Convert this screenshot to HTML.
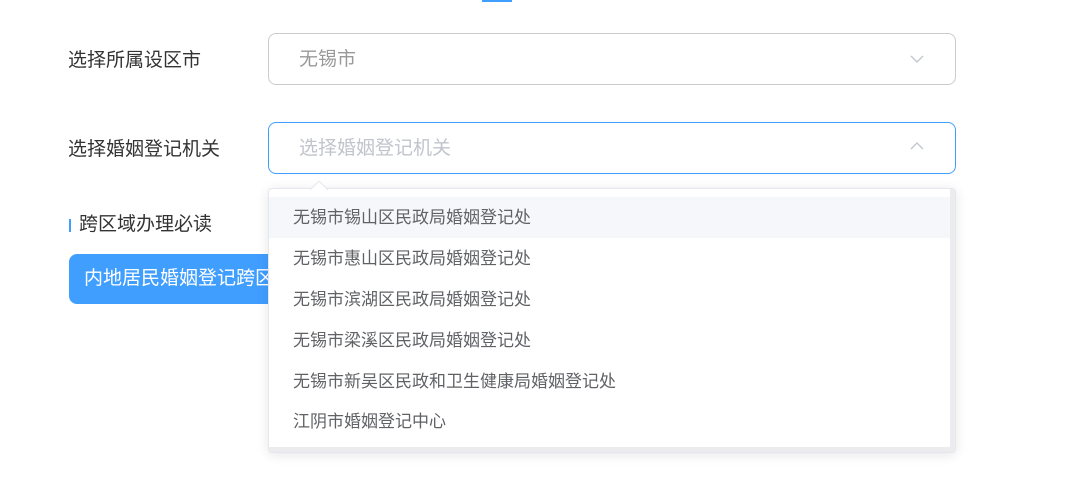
<!DOCTYPE html>
<html><head><meta charset="utf-8"><style>
body{margin:0;width:1078px;height:488px;background:#fff;position:relative;overflow:hidden;font-family:"Liberation Sans","Noto Sans CJK SC",sans-serif;}
.a{position:absolute}
.lbl{font-size:19px;color:#333;line-height:24px}
.sel{left:268px;width:686px;height:50px;border:1px solid #ccc;border-radius:8px;box-sizing:content-box}
.sel span{position:absolute;left:30px;top:14px;font-size:19px;line-height:24px}
.dd{left:268px;top:188px;width:688px;height:265px;background:#fff;border:1px solid #e4e7ed;border-radius:4px;box-shadow:0 2px 12px rgba(0,0,0,.1);box-sizing:border-box;overflow:hidden}
.it{position:absolute;left:0;width:683px;height:41px;font-size:17px;color:#606266;line-height:41px;padding-left:24px;box-sizing:border-box}
</style></head><body>
<div class="a" style="left:482px;top:0;width:30px;height:2px;background:#409eff"></div>
<div class="a lbl" style="left:68px;top:49px">选择所属设区市</div>
<div class="a lbl" style="left:68px;top:138px">选择婚姻登记机关</div>
<div class="a sel" style="top:33px"><span style="color:#999">无锡市</span>
<svg class="a" style="left:640px;top:20px" width="16" height="10"><path d="M2 2 L8 8 L14 2" fill="none" stroke="#c0c4cc" stroke-width="1.3"/></svg></div>
<div class="a sel" style="top:122px;border-color:#409eff"><span style="color:#c0c4cc">选择婚姻登记机关</span>
<svg class="a" style="left:640px;top:18px" width="16" height="10"><path d="M2 8 L8 2 L14 8" fill="none" stroke="#c0c4cc" stroke-width="1.3"/></svg></div>
<div class="a" style="left:69px;top:219px;width:2px;height:13px;background:#409eff"></div>
<div class="a lbl" style="left:79px;top:213px;color:#333">跨区域办理必读</div>
<div class="a" style="left:69px;top:254px;width:240px;height:50px;background:#409eff;border-radius:8px;color:#fff;font-size:19px;line-height:50px;padding-left:15px;box-sizing:border-box;white-space:nowrap;overflow:hidden">内地居民婚姻登记跨区域</div>
<svg class="a" style="left:310px;top:181px;z-index:3" width="18" height="9"><path d="M0 9 L9 0 L18 9" fill="#fff" stroke="#e4e7ed"/></svg>
<div class="a dd">
<div class="it" style="top:8px;background:#f5f7fa">无锡市锡山区民政局婚姻登记处</div>
<div class="it" style="top:49px">无锡市惠山区民政局婚姻登记处</div>
<div class="it" style="top:90px">无锡市滨湖区民政局婚姻登记处</div>
<div class="it" style="top:131px">无锡市梁溪区民政局婚姻登记处</div>
<div class="it" style="top:172px">无锡市新吴区民政和卫生健康局婚姻登记处</div>
<div class="it" style="top:212px">江阴市婚姻登记中心</div>
<div class="a" style="right:0;top:0;width:5px;height:265px;background:#ececee"></div>
<div class="a" style="left:0;bottom:0;width:688px;height:5px;background:#ececee"></div>
</div>
</body></html>
